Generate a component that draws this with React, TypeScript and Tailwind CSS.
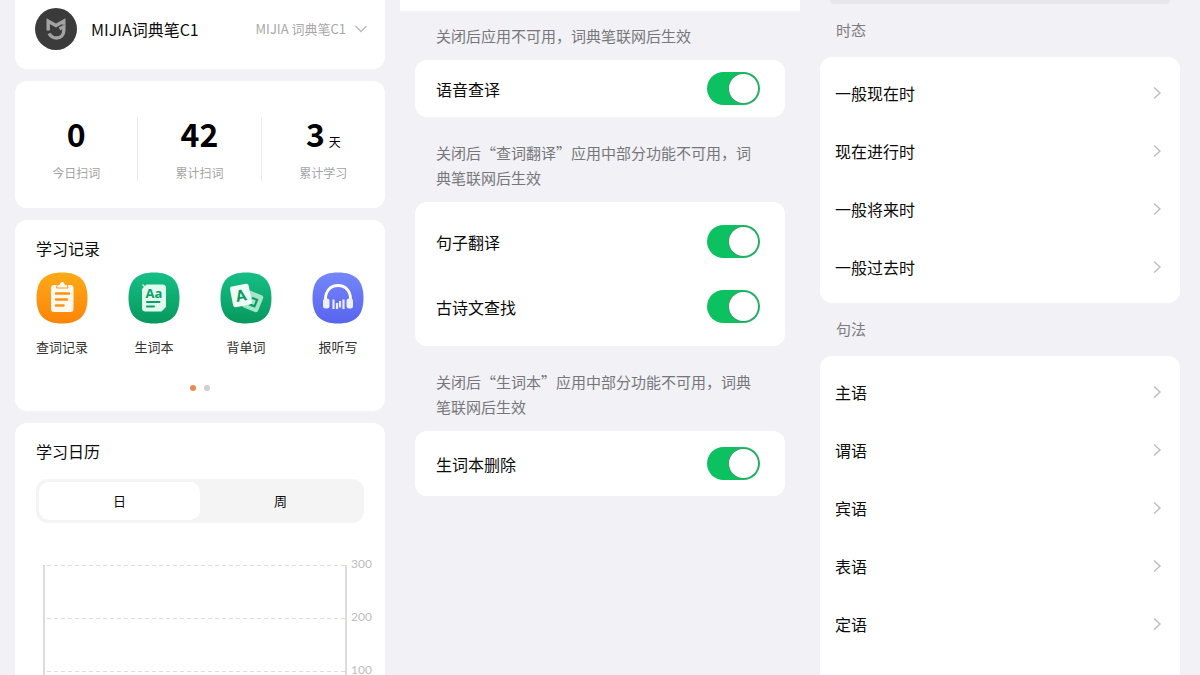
import { useState } from 'react'
import type { ReactNode } from 'react'

const stats = [
  { label: '今日扫词', value: '0' },
  { label: '累计扫词', value: '42' },
  { label: '累计学习', value: '3', unit: '天' },
]

const switchGroups = [
  { note: '关闭后应用不可用，词典笔联网后生效', items: ['语音查译'], pad: 'py-0', row: 'h-[57px]' },
  { note: '关闭后“查词翻译”应用中部分功能不可用，词典笔联网后生效', items: ['句子翻译', '古诗文查找'], pad: 'py-[7px]', row: 'h-[65px]' },
  { note: '关闭后“生词本”应用中部分功能不可用，词典笔联网后生效', items: ['生词本删除'], pad: 'py-0', row: 'h-[65px]' },
]

const tenses = ['一般现在时', '现在进行时', '一般将来时', '一般过去时']
const syntax = ['主语', '谓语', '宾语', '表语', '定语']

function MiLogo() {
  return (
    <svg viewBox="0 0 42 42" className="size-[42px] shrink-0" aria-hidden="true">
      <circle cx="21" cy="21" r="21" fill="#3b3b3b" />
      <g fill="none" stroke="#a3a3a3" strokeWidth="3.4">
        <path d="M13.200 22.500V13.200L21 17.500L28.800 13.200V16.800" />
        <path d="M24.500 20.800L28.800 18.800V22.500C28.800 27.500 25.500 30 21.500 30C18.200 30 15.800 28.500 14 25.500" />
      </g>
    </svg>
  )
}

function Squircle({ id, from, to, children }: { id: string; from: string; to: string; children: ReactNode }) {
  return (
    <svg viewBox="0 0 52 52" className="size-[52px]" aria-hidden="true">
      <defs>
        <linearGradient id={id} x1="0" y1="0" x2="0" y2="1">
          <stop offset="0" stopColor={from} />
          <stop offset="1" stopColor={to} />
        </linearGradient>
      </defs>
      <path d="M26 .5C43.5 .5 51.5 8.5 51.5 26S43.5 51.5 26 51.5S.5 43.5 .5 26S8.5 .5 26 .5Z" fill={`url(#${id})`} />
      {children}
    </svg>
  )
}

function RecordIcon() {
  return (
    <Squircle id="record" from="#ffaa18" to="#fb8409">
      <rect x="15" y="13" width="22.5" height="27" rx="3" fill="#fff8ec" />
      <path d="M20.5 16C20.5 12.800 22 12.500 23.500 12.300C24 8.500 28.500 8.500 29 12.300C30.500 12.500 32 12.800 32 16Z" fill="#fff8ec" stroke="#fd9d1c" />
      <path d="M20 21.5H33M20 27.5H31M20 33.5H27.5" stroke="#fb9317" strokeWidth="2.4" strokeLinecap="round" />
    </Squircle>
  )
}

function WordbookIcon() {
  return (
    <Squircle id="wordbook" from="#16bf86" to="#07985d">
      <path d="M18.500 12.500H34.500Q38 12.500 38 16V35L33.500 39.500H17.500Q14 39.500 14 36V17Z" fill="#e2fbef" />
      <path d="M15 13L18 16" stroke="#e2fbef" strokeWidth="1.5" strokeLinecap="round" />
      <text x="26" y="26" textAnchor="middle" fontSize="13" fontWeight="700" fill="#0a9f66" className="font-['Open_Sans',sans-serif]">Aa</text>
      <path d="M19 30H31.5M19 34.5H26" stroke="#0a9f66" strokeWidth="2" strokeLinecap="round" />
    </Squircle>
  )
}

function ReciteIcon() {
  return (
    <Squircle id="recite" from="#16bf86" to="#07985d">
      <g transform="rotate(22 33 30)">
        <rect x="24" y="20.5" width="17" height="18" rx="2.5" fill="#a5e5c8" />
        <path d="M30.500 26.500H36V33.500H30" fill="none" stroke="#0a9f66" strokeWidth="2.2" />
      </g>
      <g transform="rotate(-11 21 24)">
        <rect x="11.5" y="13" width="19" height="21" rx="2.5" fill="#effdf6" />
        <text x="21" y="29" textAnchor="middle" fontSize="16" fontWeight="700" fill="#089a60" className="font-['Roboto',sans-serif]">A</text>
      </g>
    </Squircle>
  )
}

function DictationIcon() {
  return (
    <Squircle id="dictation" from="#7587fa" to="#5864ee">
      <path d="M13.500 29V27C13.500 19 18.500 13.500 26 13.500S38.500 19 38.500 27V29" fill="none" stroke="#fff" strokeWidth="2.8" />
      <rect x="11" y="26.5" width="6.5" height="10" rx="2.5" fill="#eef0ff" />
      <rect x="34.5" y="26.5" width="6.5" height="10" rx="2.5" fill="#eef0ff" />
      <path d="M21.5 27.5V37M25 31V37M28 29V35.500M31.500 27.500V37" stroke="#e9ecff" strokeWidth="2.2" />
    </Squircle>
  )
}

const shortcuts = [
  { label: '查词记录', icon: <RecordIcon /> },
  { label: '生词本', icon: <WordbookIcon /> },
  { label: '背单词', icon: <ReciteIcon /> },
  { label: '报听写', icon: <DictationIcon /> },
]

function Chart() {
  return (
    <div className="mt-[42px] -mr-2 flex gap-[3px] pl-[7px]">
      <div className="h-[162px] flex-1 border-x-2 border-[#dcdcdc]">
        {[300, 200, 100].map(n => (
          <div key={n} className="h-[53px]">
            <svg className="block h-px w-full" aria-hidden="true">
              <line x1="2" y1="0.5" x2="100%" y2="0.5" stroke="#dedede" strokeDasharray="4 3" />
            </svg>
          </div>
        ))}
      </div>
      <div className="-mt-[9px] w-[22px] text-right font-['Lato',sans-serif] text-xs text-[#bdbdbd]">
        {[300, 200, 100].map(n => (
          <div key={n} className="h-[53px]">{n}</div>
        ))}
      </div>
    </div>
  )
}

function HomePanel() {
  const [range, setRange] = useState('日')

  return (
    <div className="flex min-w-0 flex-col gap-3 px-[15px]">
      <header className="flex h-[69px] items-start rounded-b-xl bg-white pt-2 pr-[17px] pl-5">
        <MiLogo />
        <h1 className="ml-[14px] flex-1 text-base leading-[42px]">MIJIA词典笔C1</h1>
        <button className="flex items-center gap-2 text-[13px] leading-[42px] text-[#a8a8a8]">
          MIJIA 词典笔C1
          <svg viewBox="0 0 14 8" className="h-2 w-[14px]" fill="none" stroke="#b8b8b8" aria-hidden="true">
            <path d="M1.5 1L7 6.5L12.5 1" strokeWidth="1.3" />
          </svg>
        </button>
      </header>

      <section className="grid h-[127px] grid-cols-3 divide-x divide-[#ececec] rounded-xl bg-white py-9">
        {stats.map(s => (
          <div key={s.label} className="flex flex-col items-center">
            <div className="flex h-8 items-baseline gap-1 text-[32px] leading-8 font-bold text-black">
              {s.value}
              {s.unit && <span className="text-xs font-normal">{s.unit}</span>}
            </div>
            <div className="mt-4 text-xs text-[#a3a3a3]">{s.label}</div>
          </div>
        ))}
      </section>

      <section className="h-[191px] rounded-xl bg-white px-[21px] pt-4">
        <h2 className="text-base">学习记录</h2>
        <div className="mt-3 flex justify-between">
          {shortcuts.map(s => (
            <button key={s.label} className="flex w-[52px] flex-col items-center gap-[13px] text-[13px] leading-5 whitespace-nowrap text-[#333]">
              {s.icon}
              {s.label}
            </button>
          ))}
        </div>
        <div className="mt-7 flex justify-center gap-2">
          <span className="size-[6px] rounded-full bg-[#f0874c]" />
          <span className="size-[6px] rounded-full bg-[#cfcfd2]" />
        </div>
      </section>

      <section className="flex-1 rounded-t-xl bg-white px-[21px] pt-4">
        <h2 className="text-base">学习日历</h2>
        <div className="mt-4 grid h-11 grid-cols-2 rounded-xl bg-[#f4f4f4] p-[3px]">
          {['日', '周'].map(r => (
            <button
              key={r}
              onClick={() => setRange(r)}
              className={`rounded-[10px] text-[13px] ${range === r ? 'bg-white' : ''}`}
            >
              {r}
            </button>
          ))}
        </div>
        <Chart />
      </section>
    </div>
  )
}

function SwitchRow({ label, row }: { label: string; row: string }) {
  const [on, setOn] = useState(true)

  return (
    <label className={`flex items-center justify-between ${row}`}>
      {label}
      <input
        type="checkbox"
        role="switch"
        checked={on}
        onChange={e => setOn(e.target.checked)}
        className="flex h-[33px] w-[53px] appearance-none items-center rounded-full bg-[#d9d9de] px-[2px] before:size-[29px] before:rounded-full before:bg-white checked:justify-end checked:bg-[#0bc160] checked:before:shadow-[0_0_0_1px_#3c9e69]"
      />
    </label>
  )
}

function SwitchPanel() {
  return (
    <div className="min-w-0">
      <div className="h-[11px] bg-white" />
      {switchGroups.map((g, i) => (
        <section key={g.note} className="px-[15px]">
          <p className={`px-[21px] pb-3 text-[15px] leading-[25px] text-[#77777a] ${i === 0 ? 'pt-3' : 'pt-[23px]'}`}>{g.note}</p>
          <div className={`rounded-xl bg-white pr-[25px] pl-[21px] text-base ${g.pad}`}>
            {g.items.map(label => <SwitchRow key={label} label={label} row={g.row} />)}
          </div>
        </section>
      ))}
    </div>
  )
}

function LinkList({ title, items, className }: { title: string; items: string[]; className: string }) {
  return (
    <>
      <h2 className="flex h-[53px] shrink-0 items-center px-4 text-[15px] text-[#7c7c80]">{title}</h2>
      <ul className={`bg-white py-[7px] pr-[18px] pl-[15px] ${className}`}>
        {items.map(item => (
          <li key={item}>
            <a href="#" className="flex h-[58px] items-center justify-between text-base">
              {item}
              <svg viewBox="0 0 10 14" className="h-[14px] w-[10px]" fill="none" stroke="#bdbdc0" aria-hidden="true">
                <path d="M2 1.5L8 7L2 12.5" strokeWidth="1.4" />
              </svg>
            </a>
          </li>
        ))}
      </ul>
    </>
  )
}

function GrammarPanel() {
  return (
    <div className="flex min-w-0 flex-col px-5">
      <div className="mx-[10px] h-1 shrink-0 rounded-b-lg bg-[#e6e6eb]" />
      <LinkList title="时态" items={tenses} className="rounded-xl" />
      <LinkList title="句法" items={syntax} className="flex-1 rounded-t-xl" />
    </div>
  )
}

export default function App() {
  return (
    <main className="grid h-screen grid-cols-3 overflow-hidden bg-[#f1f1f6] font-['Noto_Sans_CJK_SC',sans-serif] text-[#0c0c0c]">
      <HomePanel />
      <SwitchPanel />
      <GrammarPanel />
    </main>
  )
}
